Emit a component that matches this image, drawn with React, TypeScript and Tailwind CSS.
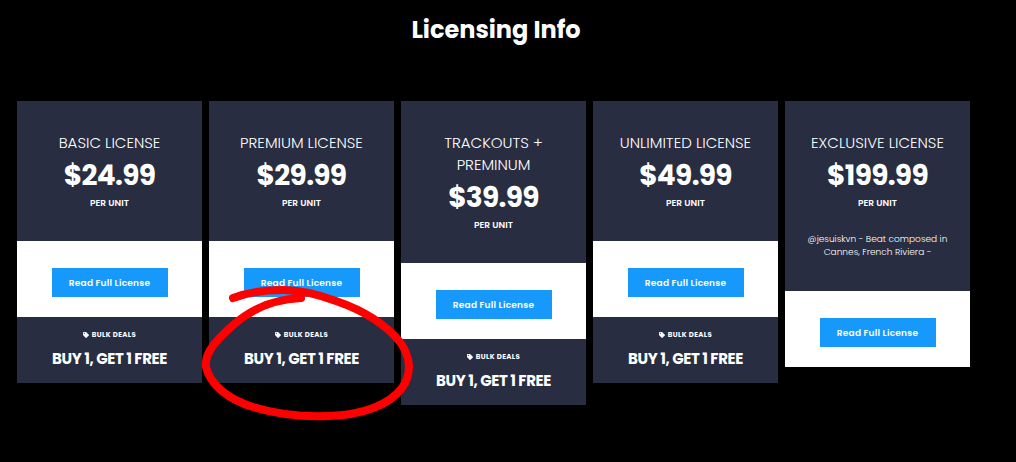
import { FaTag } from "react-icons/fa";

interface License {
    name: string;
    price: string;
    note?: string;
    deal?: string;
    highlighted?: boolean;
}

const licenses: License[] = [
    { name: "BASIC LICENSE", price: "$24.99", deal: "BUY 1, GET 1 FREE" },
    { name: "PREMIUM LICENSE", price: "$29.99", deal: "BUY 1, GET 1 FREE", highlighted: true },
    { name: "TRACKOUTS + PREMINUM", price: "$39.99", deal: "BUY 1, GET 1 FREE" },
    { name: "UNLIMITED LICENSE", price: "$49.99", deal: "BUY 1, GET 1 FREE" },
    { name: "EXCLUSIVE LICENSE", price: "$199.99", note: "@jesuiskvn - Beat composed in Cannes, French Riviera -" },
];

// Hand-drawn red ring around the bulk deal
function DealMarker() {
    return (
        <svg
            viewBox="0 0 216 140"
            className="pointer-events-none absolute -bottom-[42px] left-[53%] z-10 h-[140px] w-[216px] -translate-x-1/2"
            fill="none"
            stroke="#ff0000"
            strokeWidth="8"
            strokeLinecap="round"
            strokeLinejoin="round"
            aria-hidden="true"
        >
            <path d="M34 13C50 7 67 5 84 5C101 5 118 9 137 16C166 26 188 41 201 57C212 72 213 89 203 103C190 120 164 130 129 131C100 132 77 129 54 122C28 114 11 99 7 82C5 67 19 54 33 41C54 22 77 14 102 13" />
        </svg>
    );
}

function LicenseCard({ license }: { license: License }) {
    return (
        <article className="relative text-center text-white">
            <header className="bg-[#282d41] px-5 pt-[31px] pb-8">
                <h2 className="text-[15px] leading-[22px] font-light">{license.name}</h2>
                <p className="text-[28px] leading-[43px] font-bold tracking-tight">{license.price}</p>
                <p className="text-[9px] leading-3 font-semibold">PER UNIT</p>
                {license.note && (
                    <p className="mt-6 text-[9px] leading-[13px] font-light">{license.note}</p>
                )}
            </header>
            <div className="flex justify-center bg-white pt-[27px] pb-5">
                <button
                    type="button"
                    className="h-[29px] w-[116px] cursor-pointer bg-[#1699fb] pt-[2px] text-[9px] font-semibold tracking-wide hover:bg-[#0d86e0]"
                >
                    Read Full License
                </button>
            </div>
            {license.deal && (
                <footer className="bg-[#282d41] pt-3 pb-[13px]">
                    <p className="flex items-center justify-center gap-[3px] text-[7px] leading-3 font-bold tracking-wider">
                        <FaTag className="size-[6px]" />
                        BULK DEALS
                    </p>
                    <p className="mt-[7px] text-[15px] leading-[22px] font-bold tracking-tight">{license.deal}</p>
                </footer>
            )}
            {license.highlighted && <DealMarker />}
        </article>
    );
}

export default function App() {
    return (
        <main className="min-h-screen bg-black font-['Poppins','Inter',sans-serif]">
            <h1 className="pt-3 pr-10 pl-4 text-center text-[24px] leading-9 font-bold text-white">
                Licensing Info
            </h1>
            <section className="mt-[53px] grid grid-cols-5 items-start gap-[7px] pr-[46px] pb-10 pl-[17px]">
                {licenses.map((license) => (
                    <LicenseCard key={license.name} license={license} />
                ))}
            </section>
        </main>
    );
}
